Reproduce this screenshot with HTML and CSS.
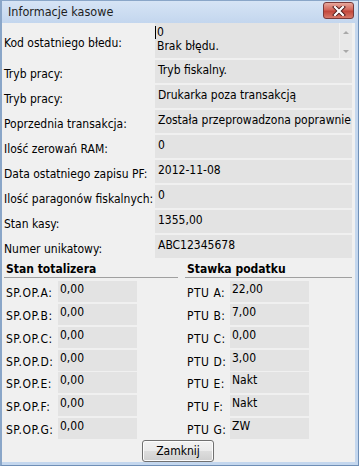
FILE: index.html
```html
<!DOCTYPE html>
<html lang="pl">
<head>
    <meta charset="UTF-8">
    <meta name="viewport" content="width=device-width, initial-scale=1.0">
    <title>Informacje kasowe</title>
    <link rel="stylesheet" href="styles.css">
</head>
<body>
    <div class="window">
        <div class="titlebar">
            <span class="title">Informacje kasowe</span>
            <button class="close-btn" title="Zamknij">
                <svg width="14" height="10" viewBox="0 0 14 10">
                    <path d="M3 1 L11 9 M11 1 L3 9" stroke="#4a1a1a" stroke-width="4" stroke-linecap="square"/>
                    <path d="M3 1 L11 9 M11 1 L3 9" stroke="#ffffff" stroke-width="2.2" stroke-linecap="square"/>
                </svg>
            </button>
        </div>

        <div class="content">
            <div class="info">
                <div class="row row-error">
                    <span class="label">Kod ostatniego błedu:</span>
                    <div class="memo">
                        <div class="memo-text"><span class="caret"></span>0<br>Brak błędu.</div>
                        <div class="scrollbar">
                            <span class="arrow-up"></span>
                            <span class="arrow-down"></span>
                        </div>
                    </div>
                </div>
                <div class="row">
                    <span class="label">Tryb pracy:</span>
                    <span class="value">Tryb fiskalny.</span>
                </div>
                <div class="row">
                    <span class="label">Tryb pracy:</span>
                    <span class="value">Drukarka poza transakcją</span>
                </div>
                <div class="row">
                    <span class="label">Poprzednia transakcja:</span>
                    <span class="value">Została przeprowadzona poprawnie</span>
                </div>
                <div class="row">
                    <span class="label">Ilość zerowań RAM:</span>
                    <span class="value">0</span>
                </div>
                <div class="row">
                    <span class="label">Data ostatniego zapisu PF:</span>
                    <span class="value">2012-11-08</span>
                </div>
                <div class="row">
                    <span class="label">Ilość paragonów fiskalnych:</span>
                    <span class="value">0</span>
                </div>
                <div class="row">
                    <span class="label">Stan kasy:</span>
                    <span class="value">1355,00</span>
                </div>
                <div class="row">
                    <span class="label">Numer unikatowy:</span>
                    <span class="value">ABC12345678</span>
                </div>
            </div>

            <div class="groups">
                <div class="group group-left">
                    <h3 class="group-title">Stan totalizera</h3>
                    <div class="small-row"><span class="small-label">SP.OP.A:</span><span class="small-value">0,00</span></div>
                    <div class="small-row"><span class="small-label">SP.OP.B:</span><span class="small-value">0,00</span></div>
                    <div class="small-row"><span class="small-label">SP.OP.C:</span><span class="small-value">0,00</span></div>
                    <div class="small-row"><span class="small-label">SP.OP.D:</span><span class="small-value">0,00</span></div>
                    <div class="small-row"><span class="small-label">SP.OP.E:</span><span class="small-value">0,00</span></div>
                    <div class="small-row"><span class="small-label">SP.OP.F:</span><span class="small-value">0,00</span></div>
                    <div class="small-row"><span class="small-label">SP.OP.G:</span><span class="small-value">0,00</span></div>
                </div>
                <div class="group group-right">
                    <h3 class="group-title">Stawka podatku</h3>
                    <div class="small-row"><span class="small-label">PTU A:</span><span class="small-value">22,00</span></div>
                    <div class="small-row"><span class="small-label">PTU B:</span><span class="small-value">7,00</span></div>
                    <div class="small-row"><span class="small-label">PTU C:</span><span class="small-value">0,00</span></div>
                    <div class="small-row"><span class="small-label">PTU D:</span><span class="small-value">3,00</span></div>
                    <div class="small-row"><span class="small-label">PTU E:</span><span class="small-value">Nakt</span></div>
                    <div class="small-row"><span class="small-label">PTU F:</span><span class="small-value">Nakt</span></div>
                    <div class="small-row"><span class="small-label">PTU G:</span><span class="small-value">ZW</span></div>
                </div>
            </div>

            <div class="footer">
                <button class="button">Zamknij</button>
            </div>
        </div>
    </div>
</body>
</html>
```

FILE: styles.css
```css
body {
    margin: 0;
    font-family: "DejaVu Sans Condensed", "DejaVu Sans", sans-serif;
    font-stretch: condensed;
    font-size: 12px;
    color: #000;
    background: #f0f0f0;
}

.window {
    width: 359px;
    height: 466px;
    box-sizing: border-box;
    display: flex;
    flex-direction: column;
    background: #c4d7ee;
    border-left: 2px solid #8aa6c8;
    border-right: 1px solid #6f8fb6;
    border-bottom: 1px solid #6f8fb6;
    padding: 0 3px 3px 0;
}

.titlebar {
    height: 23px;
    flex-shrink: 0;
    display: flex;
    align-items: center;
    justify-content: space-between;
    background: linear-gradient(#d6e4f5, #c3d6ee);
    border-top: 1px solid #8aa6c8;
    box-sizing: border-box;
    margin-right: -3px;
}

.title {
    padding-left: 6px;
    padding-bottom: 1px;
    font-size: 12.5px;
    color: #1e1e1e;
}

.close-btn {
    width: 31px;
    height: 17px;
    margin: 0 4px 3px 0;
    padding: 0;
    border: 1px solid #7a3a3a;
    border-radius: 3px;
    background: linear-gradient(#e8a89c, #d2665a 45%, #c2473b 55%, #d7796a);
    display: flex;
    align-items: center;
    justify-content: center;
}

.content {
    flex: 1;
    background: #f0f0f0;
    padding: 0 3px 0 2px;
    display: flex;
    flex-direction: column;
}

.info {
    display: flex;
    flex-direction: column;
    gap: 2px;
}

.row {
    display: grid;
    grid-template-columns: 151px 1fr;
    height: 23px;
}

.row-error {
    height: 35px;
}

.label {
    padding-top: 7px;
    white-space: nowrap;
}

.row-error .label {
    padding-top: 13px;
}

.value {
    background: #e3e3e3;
    padding: 3px 0 0 3px;
    white-space: nowrap;
    overflow: hidden;
}

.memo {
    background: #e3e3e3;
    display: flex;
    justify-content: space-between;
}

.memo-text {
    position: relative;
    padding: 2px 0 0 2px;
    line-height: 14px;
}

.caret {
    position: absolute;
    left: 0;
    top: 3px;
    width: 1px;
    height: 13px;
    background: #000;
}

.scrollbar {
    width: 12px;
    background: #e8e8e8;
    border-left: 1px solid #f0f0f0;
    display: flex;
    flex-direction: column;
    align-items: center;
    justify-content: space-between;
    padding: 8px 0 5px;
}

.arrow-up,
.arrow-down {
    width: 0;
    height: 0;
    border-left: 3px solid transparent;
    border-right: 3px solid transparent;
}

.arrow-up {
    border-bottom: 3px solid #a9a9a9;
}

.arrow-down {
    border-top: 3px solid #a9a9a9;
}

.groups {
    display: grid;
    grid-template-columns: 174px 1fr;
    margin-top: 4px;
    column-gap: 7px;
}

.group {
    display: flex;
    flex-direction: column;
    gap: 1.9px;
}

.group-title {
    margin: 0 0 1px;
    font-size: 12px;
    font-weight: bold;
    padding: 0 0 1px 2px;
    border-bottom: 1px solid #a0a0a0;
    line-height: 14px;
}

.small-row {
    display: flex;
    height: 21px;
}

.small-label {
    width: 54px;
    padding: 5px 0 0 2px;
    box-sizing: border-box;
    white-space: nowrap;
    letter-spacing: 0.5px;
}

.group-right .small-label {
    width: 45px;
}

.small-value {
    width: 79px;
    background: #e3e3e3;
    padding: 1px 0 0 2px;
    box-sizing: border-box;
}

.footer {
    display: flex;
    justify-content: center;
    margin-top: 1px;
}

.button {
    width: 72px;
    height: 22px;
    padding: 0 0 1px;
    font-family: inherit;
    font-size: 12px;
    color: #000;
    border: 1px solid #707070;
    border-radius: 3px;
    background: linear-gradient(#f2f2f2 0%, #ebebeb 50%, #dddddd 51%, #cfcfcf 100%);
    box-shadow: inset 0 0 0 1px #fcfcfc;
}
```
